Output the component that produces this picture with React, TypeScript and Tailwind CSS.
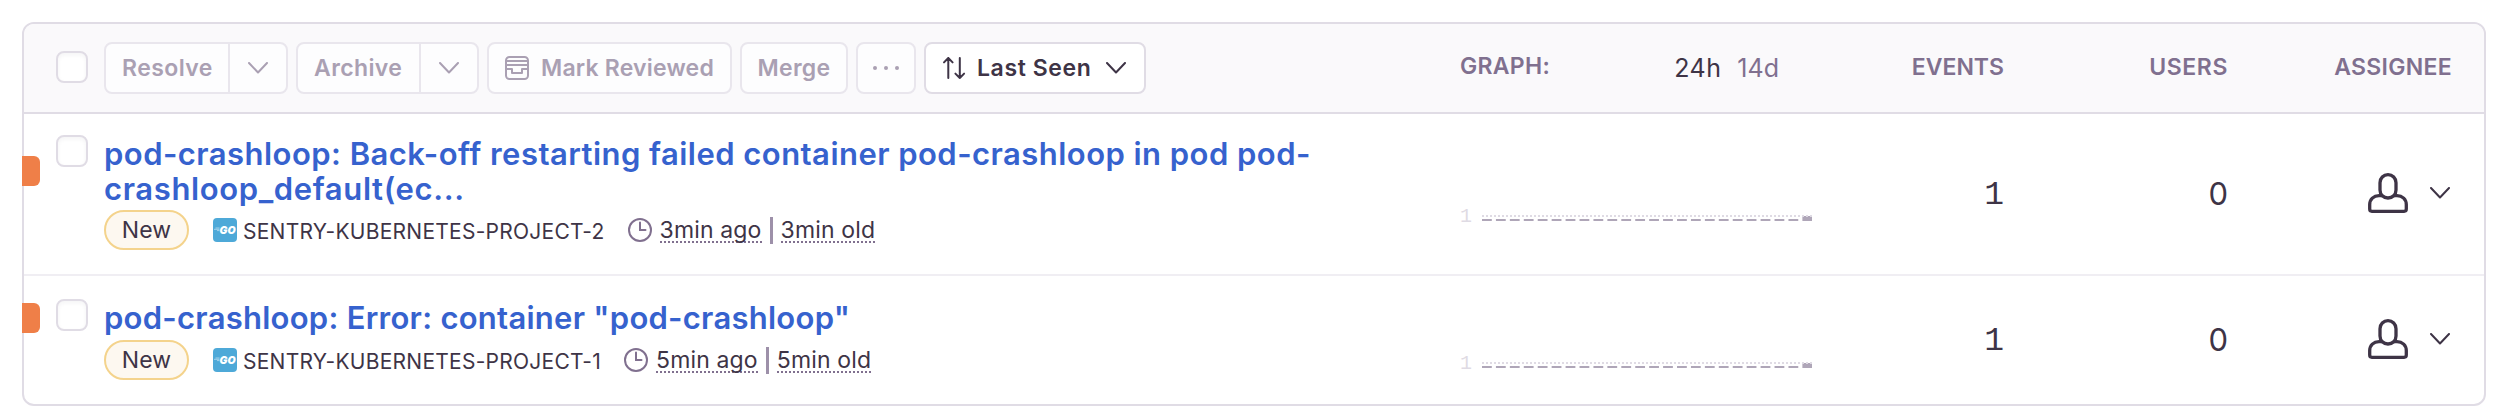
import type { ReactNode } from "react";

function Chevron({ className = "" }: { className?: string }) {
  return (
    <svg viewBox="0 0 20 12" className={`shrink-0 ${className}`} fill="none" stroke="currentColor" strokeWidth="2" strokeLinecap="round" strokeLinejoin="round">
      <path d="M1 1l9 9.500L19 1" />
    </svg>
  );
}

function ReviewIcon() {
  return (
    <svg viewBox="0 0 24 24" className="h-6 w-6 shrink-0" fill="none" stroke="currentColor" strokeWidth="2" strokeLinejoin="round">
      <rect x="1" y="1" width="22" height="22" rx="3.5" />
      <path d="M1 5h22M1 9h22M1 13h6v4h10v-4h6" />
    </svg>
  );
}

function SortIcon() {
  return (
    <svg viewBox="0 0 24 24" className="h-6 w-6 shrink-0" fill="none" stroke="currentColor" strokeWidth="2" strokeLinecap="round" strokeLinejoin="round">
      <path d="M6.300 22V2M2 6.400L6.300 2l4.300 4.400M17.800 2v20M13.400 17.600l4.400 4.400 4.300-4.400" />
    </svg>
  );
}

function ClockIcon() {
  return (
    <svg viewBox="0 0 24 24" className="h-6 w-6 shrink-0 text-[#80708f]" fill="none" stroke="currentColor" strokeWidth="2" strokeLinecap="round">
      <circle cx="12" cy="12" r="11" />
      <path d="M12 4.500V12h5.500" />
    </svg>
  );
}

function UserIcon() {
  return (
    <svg viewBox="0 0 40 40" className="h-10 w-10 shrink-0" fill="none" stroke="currentColor" strokeWidth="3.3" strokeLinejoin="round">
      <path d="M20 1.700c-4.500 0-8 3.500-8 8v7.300c0 4.700 3.500 8 8 8s8-3.300 8-8V9.700c0-4.500-3.500-8-8-8z" />
      <path d="M14 22.600h-3c-5.300 0-9.300 3.700-9.300 8.900v4.600c0 1.400.9 2.200 2.200 2.200h32.200c1.300 0 2.200-.8 2.200-2.200v-4.600c0-5.200-4-8.900-9.300-8.900h-3" />
    </svg>
  );
}

function GoIcon() {
  return (
    <svg viewBox="0 0 24 24" className="h-6 w-6 shrink-0">
      <rect width="24" height="24" rx="4" fill="#4ea9d8" />
      <path d="M2.500 10h4M1 11.300h5.500M4 12.600h2.500" stroke="#fff" strokeWidth="0.6" opacity="0.8" />
      <text x="6.5" y="15.600" fill="#fff" textLength="16" lengthAdjust="spacingAndGlyphs" className="font-['Inter'] text-[11px] font-black italic">GO</text>
    </svg>
  );
}

function Checkbox() {
  return <div className="h-8 w-8 shrink-0 rounded-lg border-2 border-[#e0dce5] bg-white shadow-[inset_0_2px_4px_rgba(43,34,51,0.05)]" />;
}

const BTN = "flex h-[52px] shrink-0 items-center rounded-lg border-2 border-[#e9e6ed] bg-[#fdfdfe] text-[23px] leading-none font-semibold text-[#aaa0b3]";

function SplitButton({ label, className, labelClass }: { label: string; className: string; labelClass: string }) {
  return (
    <div className={`${BTN} ${className}`}>
      <span className={`flex h-full shrink-0 items-center border-r-2 border-[#e9e6ed] pl-4 ${labelClass}`}>{label}</span>
      <span className="flex flex-1 justify-center">
        <Chevron className="h-3 w-5" />
      </span>
    </div>
  );
}

const HEAD = "text-right text-[23px] leading-none font-semibold text-[#80708f]";

function Header() {
  return (
    <div className="flex h-[90px] items-center rounded-t-[10px] border-b-2 border-[#e0dce5] bg-[#faf9fb] pr-8">
      <div className="flex w-[1437px] items-center gap-2 pl-8">
        <div className="mr-2 -mt-0.5">
          <Checkbox />
        </div>
        <SplitButton label="Resolve" className="w-[184px]" labelClass="w-[124px] tracking-[0.44px]" />
        <SplitButton label="Archive" className="w-[183px]" labelClass="w-[123px] tracking-[0.4px]" />
        <div className={`${BTN} w-[245px] gap-3 pl-4`}>
          <ReviewIcon />
          <span className="whitespace-nowrap tracking-[0.2px]">Mark Reviewed</span>
        </div>
        <div className={`${BTN} w-[108px] justify-center tracking-[0.3px]`}>Merge</div>
        <div className={`${BTN} w-[60px] justify-center gap-[7px]`}>
          <i className="h-1 w-1 rounded-full bg-current" />
          <i className="h-1 w-1 rounded-full bg-current" />
          <i className="h-1 w-1 rounded-full bg-current" />
        </div>
        <div className="flex h-[52px] w-[222px] items-center rounded-lg border-2 border-[#e0dce5] bg-white pl-4 text-[23px] leading-none font-semibold text-[#3e3446]">
          <SortIcon />
          <span className="ml-[11px] w-[129px] whitespace-nowrap tracking-[0.6px]">Last Seen</span>
          <Chevron className="h-3 w-5" />
        </div>
      </div>
      <div className="flex w-[352px] items-center pr-[34px] leading-none">
        <span className="-mt-1 -ml-px text-[23px] font-semibold tracking-[0.3px] text-[#80708f]">GRAPH:</span>
        <span className="ml-auto text-[25px] tracking-[0.4px] text-[#3e3446]">24h</span>
        <span className="ml-4 text-[25px] text-[#80708f]">14d</span>
      </div>
      <div className={`${HEAD} -mt-0.5 w-[191px]`}>EVENTS</div>
      <div className={`${HEAD} -mt-0.5 w-[224px] tracking-[0.6px]`}>USERS</div>
      <div className={`${HEAD} -mt-0.5 w-[224px] tracking-[0.3px]`}>ASSIGNEE</div>
    </div>
  );
}

const BARS = Array.from({ length: 24 }, (_, i) => i * 13.93);
const DOTS = Array.from({ length: 83 }, (_, i) => i * 4);

function Graph() {
  return (
    <svg viewBox="0 0 330 56" className="h-14 w-[330px]">
      {BARS.map((x, i) =>
        i === 23 ? <rect key={i} x={x} y={50} width={9.6} height={5} fill="#afa6b8" /> : <rect key={i} x={x} y={53} width={9.8} height={2} fill="#afa6b8" />,
      )}
      {DOTS.map((x) => (
        <rect key={x} x={x} y={49} width={2} height={2} fill="#dfdbe4" />
      ))}
    </svg>
  );
}

type Issue = {
  title: ReactNode;
  titleClass: string;
  checkClass: string;
  levelClass: string;
  graphClass: string;
  rowClass: string;
  project: string;
  seen: string;
  age: string;
};

const ISSUES: Issue[] = [
  {
    title: (
      <>
        <span className="tracking-[0.46px]">pod-crashloop: Back-off restarting failed container pod-crashloop in pod pod-</span>
        <br />
        <span className="tracking-[0.62px]">crashloop_default(ec...</span>
      </>
    ),
    titleClass: "leading-[35px]",
    checkClass: "pt-[21px]",
    levelClass: "top-[42px]",
    graphClass: "",
    rowClass: "border-b-2 border-[#f0eef3]",
    project: "SENTRY-KUBERNETES-PROJECT-2",
    seen: "3min ago",
    age: "3min old",
  },
  {
    title: <span className="tracking-[0.26px]">{'pod-crashloop: Error: container "pod-crashloop"'}</span>,
    titleClass: "leading-[36px] pt-0.5",
    checkClass: "pt-[23px]",
    levelClass: "top-[27px]",
    graphClass: "pt-0.5",
    rowClass: "",
    project: "SENTRY-KUBERNETES-PROJECT-1",
    seen: "5min ago",
    age: "5min old",
  },
];

const TIME = "mt-0.5 border-b-2 border-dotted border-[#80708f] text-[23px] leading-[22px] tracking-[0.15px] whitespace-nowrap";

function IssueRow({ issue }: { issue: Issue }) {
  return (
    <div className={`relative flex pr-8 ${issue.rowClass}`}>
      <div className={`absolute -left-0.5 h-[30px] w-[18px] rounded-r-md bg-[#ef7f48] ${issue.levelClass}`} />
      <div className="flex w-[1437px] gap-4 pl-8">
        <div className={issue.checkClass}>
          <Checkbox />
        </div>
        <div className="pt-[22px] pb-6">
          <div className={`text-[31px] font-semibold whitespace-nowrap text-[#3662ce] ${issue.titleClass}`}>{issue.title}</div>
          <div className="mt-1 flex h-10 items-center">
            <span className="flex h-10 w-[85px] items-center justify-center rounded-full border-2 border-[#f4d38c] bg-[#fdf8f0] text-[23px] leading-none tracking-[0.2px]">New</span>
            <span className="ml-6 flex">
              <GoIcon />
            </span>
            <span className="mt-0.5 ml-1.5 text-[21px] leading-none tracking-[0.25px] whitespace-nowrap">{issue.project}</span>
            <span className="ml-[23px] flex">
              <ClockIcon />
            </span>
            <span className={`ml-2 ${TIME}`}>{issue.seen}</span>
            <span className="ml-2 h-[27px] w-[3px] bg-[#9d90a9]" />
            <span className={`ml-2 ${TIME}`}>{issue.age}</span>
          </div>
        </div>
      </div>
      <div className={`flex w-[352px] items-center ${issue.graphClass}`}>
        <span className="-ml-px w-[22px] pt-[46px] font-['Liberation_Mono'] text-[20px] leading-none text-[#dfdbe4]">1</span>
        <Graph />
      </div>
      <div className="flex w-[191px] items-center justify-end pt-0.5 font-['Liberation_Mono'] text-[33px] leading-none">1</div>
      <div className="flex w-[224px] items-center justify-end pb-0.5 text-[31px] leading-none">0</div>
      <div className="flex w-[224px] items-center justify-end pr-0.5 pb-0.5">
        <UserIcon />
        <Chevron className="ml-[22px] h-3 w-5" />
      </div>
    </div>
  );
}

export default function App() {
  return (
    <div className="h-[420px] bg-white pt-[22px] pl-[22px] font-['Inter',sans-serif] text-[#3e3446]">
      <div className="w-[2464px] rounded-xl border-2 border-[#e0dce5] bg-white">
        <Header />
        {ISSUES.map((issue) => (
          <IssueRow key={issue.project} issue={issue} />
        ))}
      </div>
    </div>
  );
}
